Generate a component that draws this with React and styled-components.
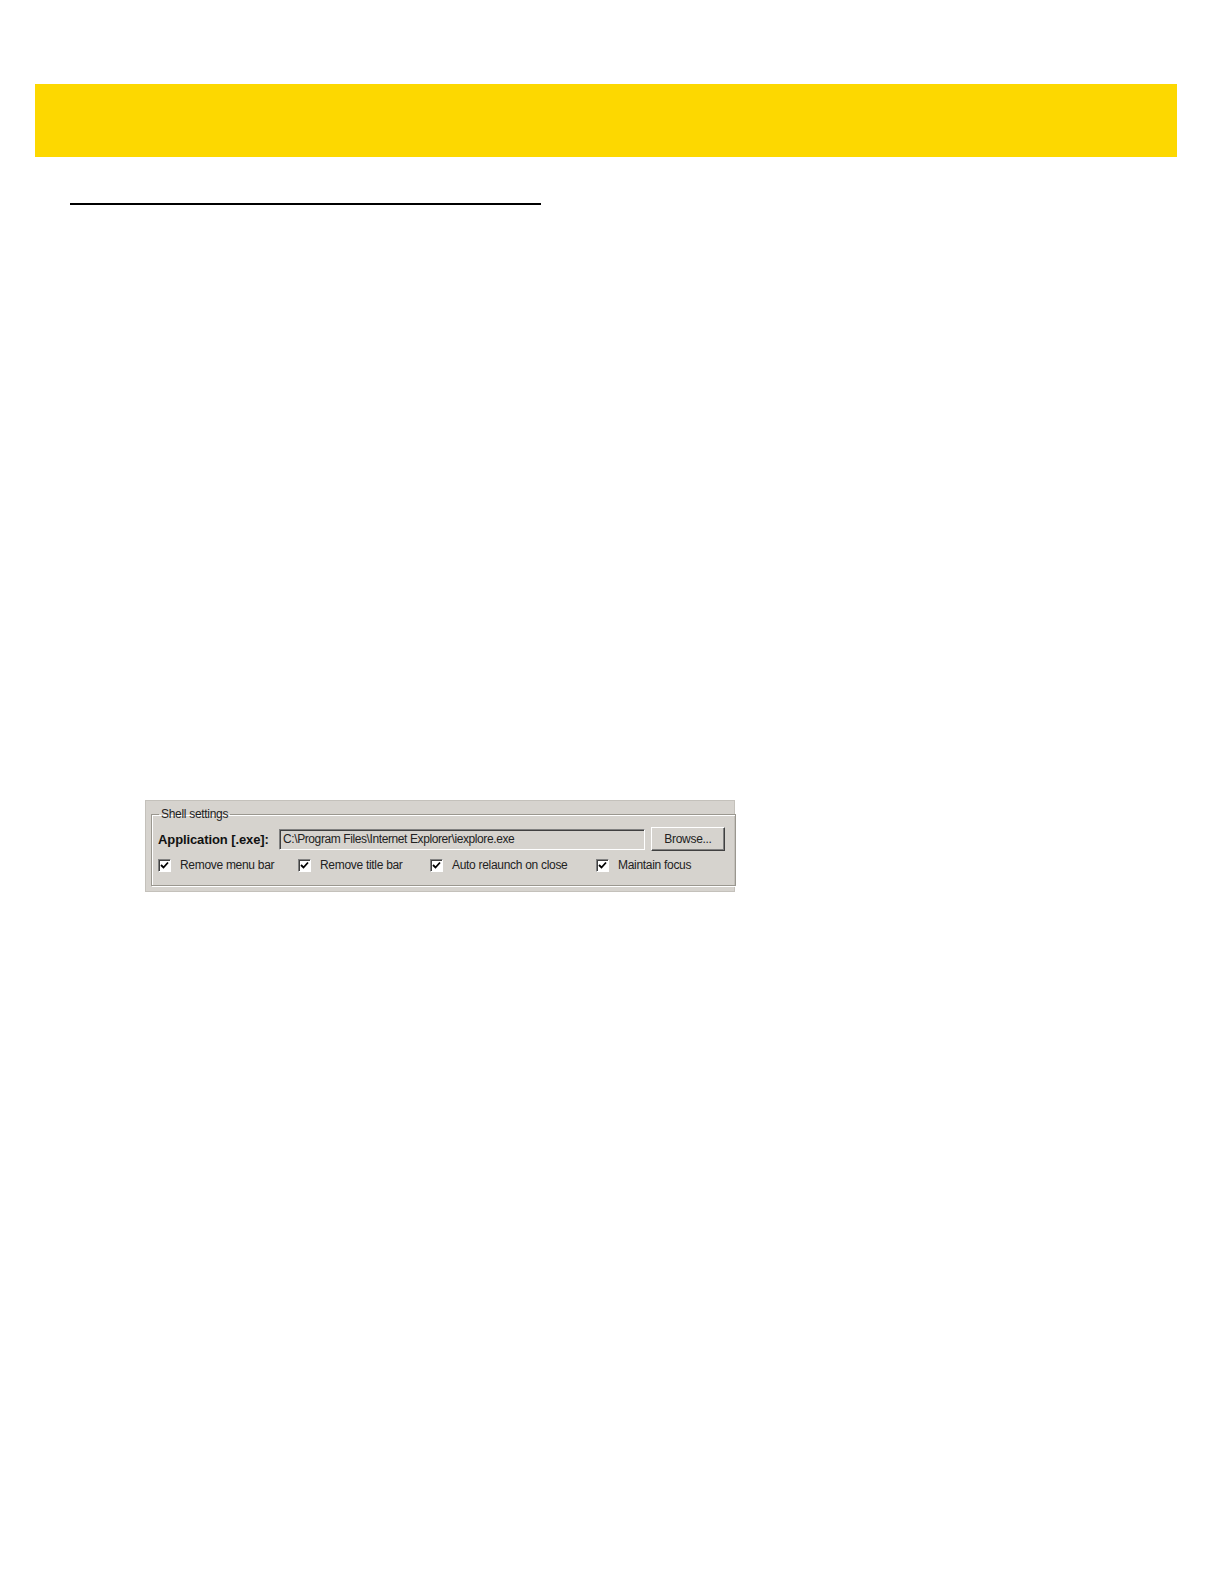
import React from "react";
import styled, { createGlobalStyle } from "styled-components";

const Global = createGlobalStyle`
  html, body { margin: 0; padding: 0; background: #ffffff; overflow: hidden; }
  body { font-family: "Liberation Sans", Arial, sans-serif; }
`;

const Page = styled.div`
  height: 1584px;
  background: #fff;
  padding-top: 84px;
  box-sizing: border-box;
  overflow: hidden;
`;

const Banner = styled.div`
  margin-left: 35px;
  width: 1142px;
  height: 73px;
  background: #fdd800;
`;

const Rule = styled.div`
  margin: 46px 0 0 70px;
  width: 471px;
  height: 2px;
  background: #000;
`;

const Panel = styled.div`
  margin: 595px 0 0 145px;
  width: 590px;
  height: 92px;
  box-sizing: border-box;
  background: #d6d3ce;
  border: 1px solid #c4c1bb;
  padding: 7px 6px 5px 5px;
`;

const Group = styled.fieldset`
  margin: 0;
  height: 78px;
  box-sizing: border-box;
  border: 1px solid #9a978f;
  box-shadow: inset 1px 1px 0 #fff, 1px 1px 0 #fff;
  padding: 7px 10px 0 5px;
  display: flex;
  flex-direction: column;
  gap: 7px;
`;

const Legend = styled.legend`
  font-size: 12px;
  color: #222;
  padding: 0 2px;
  margin-left: 2px;
  line-height: 12px;
  letter-spacing: -0.3px;
`;

const Row = styled.div`
  display: flex;
  align-items: center;
`;

const Label = styled.span`
  font-weight: bold;
  font-size: 13px;
  color: #111;
  width: 121px;
  padding-left: 1px;
  letter-spacing: -0.1px;
`;

const Field = styled.div`
  width: 366px;
  height: 21px;
  box-sizing: border-box;
  border: 1px solid;
  border-color: #808080 #fff #fff #808080;
  box-shadow: inset 1px 1px 0 #404040;
  background: #d6d3ce;
  font-size: 12px;
  color: #222;
  display: flex;
  align-items: center;
  padding-left: 3px;
  letter-spacing: -0.4px;
`;

const Button = styled.div`
  margin-left: 6px;
  width: 74px;
  height: 24px;
  box-sizing: border-box;
  border: 1px solid;
  border-color: #fff #404040 #404040 #fff;
  box-shadow: inset -1px -1px 0 #808080;
  font-size: 12px;
  color: #222;
  display: flex;
  align-items: center;
  justify-content: center;
  letter-spacing: -0.3px;
`;

const Checks = styled.div`
  display: flex;
  align-items: center;
  padding-left: 1px;
`;

const CheckItem = styled.div`
  display: flex;
  align-items: center;
  width: ${(p) => p.w}px;
  font-size: 12px;
  color: #222;
  letter-spacing: -0.3px;
`;

const Box = styled.span`
  width: 13px;
  height: 13px;
  box-sizing: border-box;
  border: 1px solid;
  border-color: #808080 #fff #fff #808080;
  box-shadow: inset 1px 1px 0 #404040;
  background: #fff;
  margin-right: 9px;
  display: flex;
  align-items: center;
  justify-content: center;
`;

const Tick = () => (
  <svg width="9" height="9" viewBox="0 0 9 9">
    <path d="M1 4 L3.5 6.5 L8 1.5" fill="none" stroke="#000" strokeWidth="1.8" />
  </svg>
);

const items = [
  { text: "Remove menu bar", w: 140 },
  { text: "Remove title bar", w: 132 },
  { text: "Auto relaunch on close", w: 166 },
  { text: "Maintain focus", w: 120 },
];

export default function App() {
  return (
    <>
      <Global />
      <Page>
        <Banner />
        <Rule />
        <Panel>
          <Group>
            <Legend>Shell settings</Legend>
            <Row>
              <Label>Application [.exe]:</Label>
              <Field>C:\Program Files\Internet Explorer\iexplore.exe</Field>
              <Button>Browse...</Button>
            </Row>
            <Checks>
              {items.map((it) => (
                <CheckItem key={it.text} w={it.w}>
                  <Box>
                    <Tick />
                  </Box>
                  {it.text}
                </CheckItem>
              ))}
            </Checks>
          </Group>
        </Panel>
      </Page>
    </>
  );
}
